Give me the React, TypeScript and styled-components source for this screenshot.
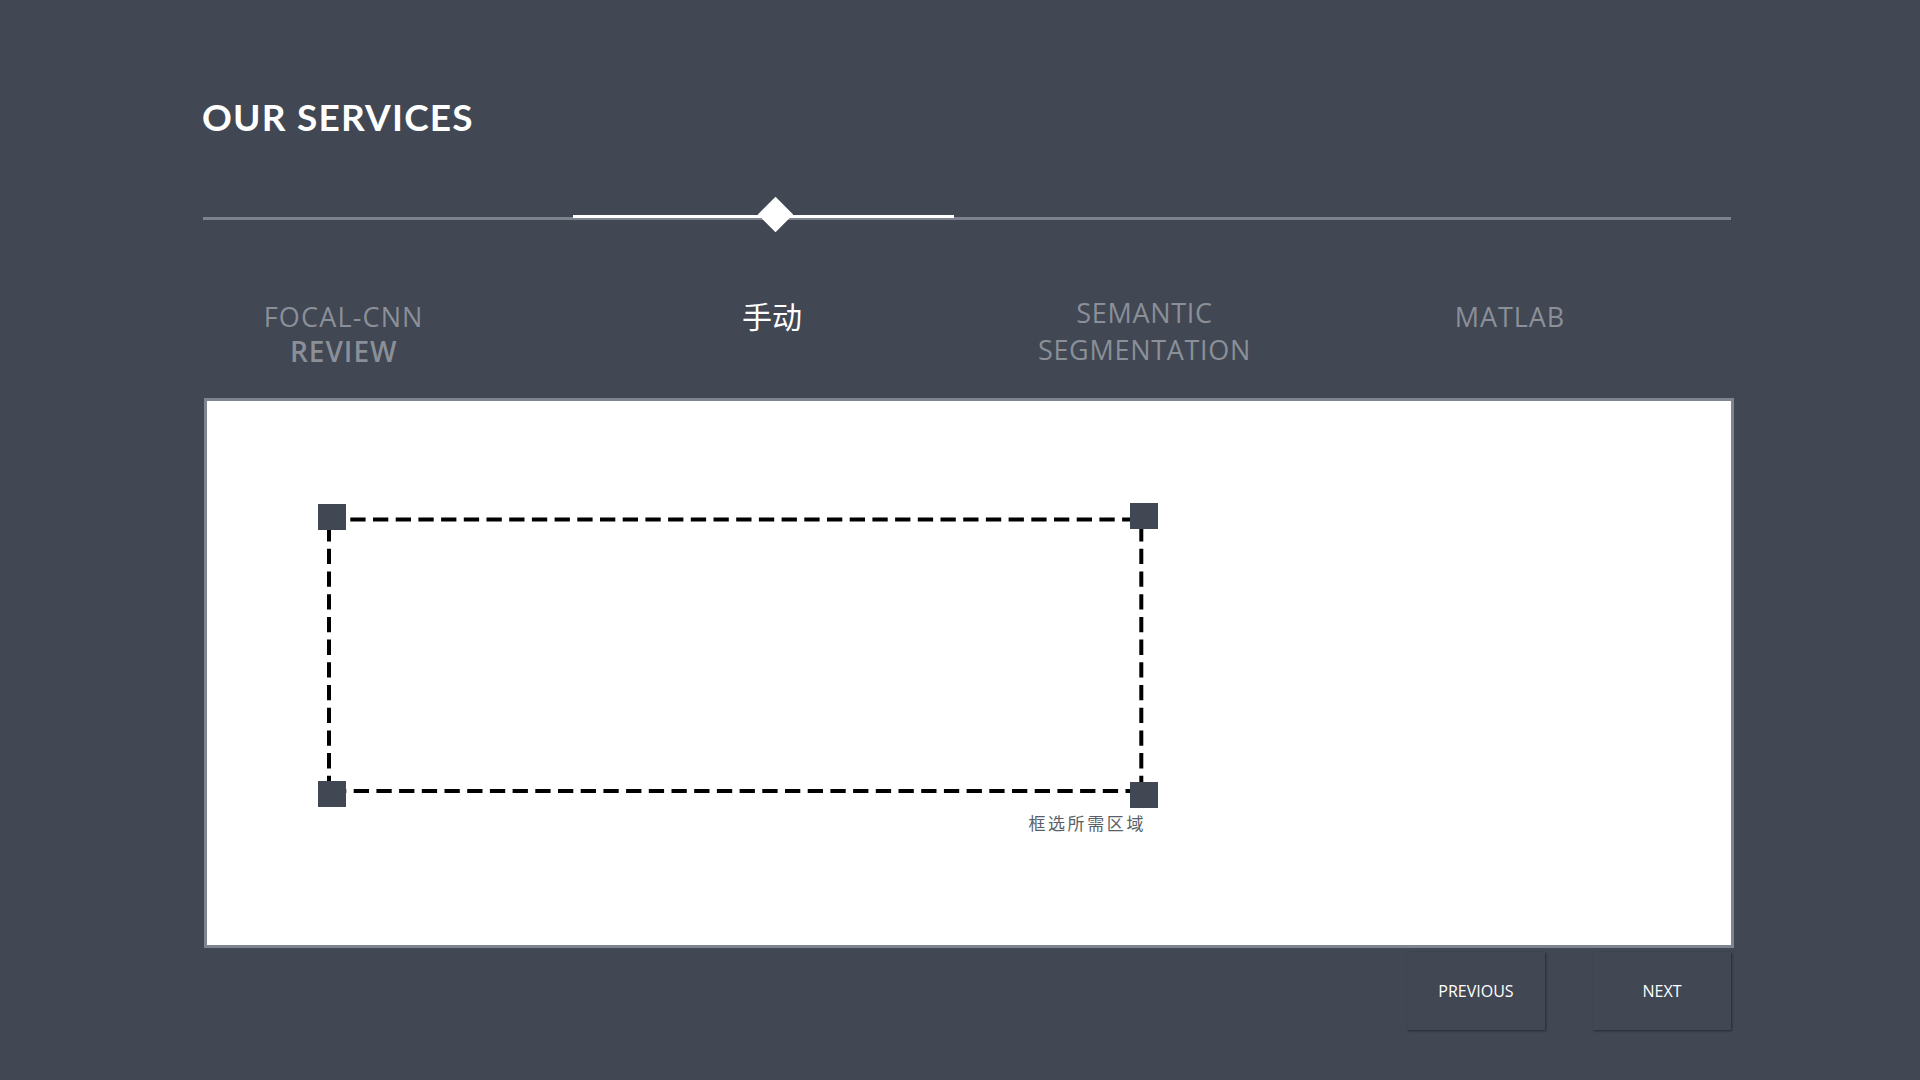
import React from "react";
import styled, { createGlobalStyle } from "styled-components";

const BG = "#414753";

const Global = createGlobalStyle`
  html, body {
    margin: 0;
    padding: 0;
    background: ${BG};
  }
  body {
    min-height: 100vh;
    font-family: "Open Sans", "Noto Sans", "Noto Sans CJK SC", sans-serif;
  }
`;

const Page = styled.main`
  box-sizing: border-box;
  width: 1920px;
  height: 1080px;
  padding: 95px 0 0 204px;
  overflow: hidden;
`;

const Title = styled.h1`
  margin: 0 0 0 -2px;
  font-family: "Lato", "Open Sans", sans-serif;
  font-weight: 700;
  font-size: 37px;
  line-height: 44px;
  letter-spacing: 1.2px;
  color: #ffffff;
`;

const Track = styled.div`
  position: relative;
  box-sizing: border-box;
  width: 1528px;
  height: 36px;
  padding-top: 21px;
  margin: 57px 0 0 -1px;
`;

const TrackLine = styled.div`
  height: 3px;
  background: #7e848e;
`;

const TrackActive = styled.div`
  position: absolute;
  top: 19px;
  left: 370px;
  width: 381px;
  height: 3px;
  background: #ffffff;
`;

const Knob = styled.div`
  position: absolute;
  top: 5.5px;
  left: 560px;
  width: 25px;
  height: 25px;
  background: #ffffff;
  transform: rotate(45deg);
`;

const TabRow = styled.nav`
  display: flex;
  align-items: flex-start;
  height: 108px;
  margin-top: 58px;
`;

const Tab = styled.div<{ $ml: number; $pt: number; $active?: boolean }>`
  display: flex;
  flex-direction: column;
  align-items: center;
  width: 240px;
  flex: 0 0 240px;
  margin-left: ${(p) => p.$ml}px;
  padding-top: ${(p) => p.$pt}px;
  color: ${(p) => (p.$active ? "#ffffff" : "#8a8f98")};
  text-transform: uppercase;
  white-space: nowrap;
  cursor: pointer;
`;

const TabLine = styled.span<{ $size: number; $lh: number; $weight?: number; $ls?: number; $cjk?: boolean }>`
  display: block;
  font-family: ${(p) =>
    p.$cjk
      ? `"Noto Sans CJK SC", "Noto Sans", sans-serif`
      : `"Open Sans", "Noto Sans", sans-serif`};
  font-size: ${(p) => p.$size}px;
  line-height: ${(p) => p.$lh}px;
  font-weight: ${(p) => p.$weight ?? 400};
  letter-spacing: ${(p) => p.$ls ?? 1}px;
`;

const Panel = styled.section`
  position: relative;
  box-sizing: border-box;
  width: 1530px;
  height: 550px;
  background: #ffffff;
  border: 3px solid #7f8590;
`;

const Selection = styled.div`
  position: absolute;
  left: 111px;
  top: 102px;
  width: 840px;
  display: flex;
  flex-direction: column;
`;

const Caption = styled.div`
  align-self: flex-end;
  margin: 3px 12px 0 0;
  font-family: "Noto Sans CJK SC", "Noto Sans", sans-serif;
  font-size: 17px;
  line-height: 24px;
  letter-spacing: 2.6px;
  color: #5a5f67;
`;

const ButtonRow = styled.div`
  display: flex;
  justify-content: flex-end;
  gap: 48px;
  width: 1527px;
  margin-top: 4px;
`;

const NavButton = styled.button`
  width: 138px;
  height: 78px;
  padding: 0;
  border: none;
  background: ${BG};
  box-shadow: 1px 1px 2px rgba(0, 0, 0, 0.4);
  color: #ffffff;
  font-family: "Open Sans", "Noto Sans", sans-serif;
  font-size: 16px;
  text-transform: uppercase;
  cursor: pointer;
`;

const SelectionDrawing: React.FC = () => (
  <svg width="840" height="305" viewBox="0 0 840 305" style={{ display: "block" }}>
    <g stroke="#000" strokeWidth="4" fill="none" strokeDasharray="15.3 7.4">
      <path d="M11 16.5 H823.3" strokeDashoffset="1.4" />
      <path d="M11 288 H823.3" strokeDashoffset="-2" />
      <path d="M11 16.5 V288" strokeDashoffset="16.1" />
      <path d="M823.3 16.5 V288" strokeDashoffset="16.1" />
    </g>
    <g fill={BG}>
      <rect x="0" y="1" width="28" height="26" />
      <rect x="812" y="0" width="28" height="26" />
      <rect x="0" y="278" width="28" height="26" />
      <rect x="812" y="279" width="28" height="26" />
    </g>
  </svg>
);

export default function App() {
  return (
    <>
      <Global />
      <Page>
        <Title>OUR SERVICES</Title>
        <Track>
          <TrackLine />
          <TrackActive />
          <Knob />
        </Track>
        <TabRow>
          <Tab $ml={19.7} $pt={9.8}>
            <TabLine $size={27} $lh={34} $ls={1.15}>FOCAL-CNN</TabLine>
            <TabLine $size={28} $lh={34} $weight={600} $ls={1}>REVIEW</TabLine>
          </Tab>
          <Tab $ml={188.3} $pt={5.4} $active>
            <TabLine $size={30} $lh={40} $ls={0} $cjk>手动</TabLine>
          </Tab>
          <Tab $ml={132.5} $pt={3.8}>
            <TabLine $size={27} $lh={37} $ls={0.7}>SEMANTIC</TabLine>
            <TabLine $size={27} $lh={37} $ls={0.7}>SEGMENTATION</TabLine>
          </Tab>
          <Tab $ml={125.5} $pt={9.5}>
            <TabLine $size={27} $lh={34} $ls={0.9}>MATLAB</TabLine>
          </Tab>
        </TabRow>
        <Panel>
          <Selection>
            <SelectionDrawing />
            <Caption>框选所需区域</Caption>
          </Selection>
        </Panel>
        <ButtonRow>
          <NavButton>Previous</NavButton>
          <NavButton>Next</NavButton>
        </ButtonRow>
      </Page>
    </>
  );
}
